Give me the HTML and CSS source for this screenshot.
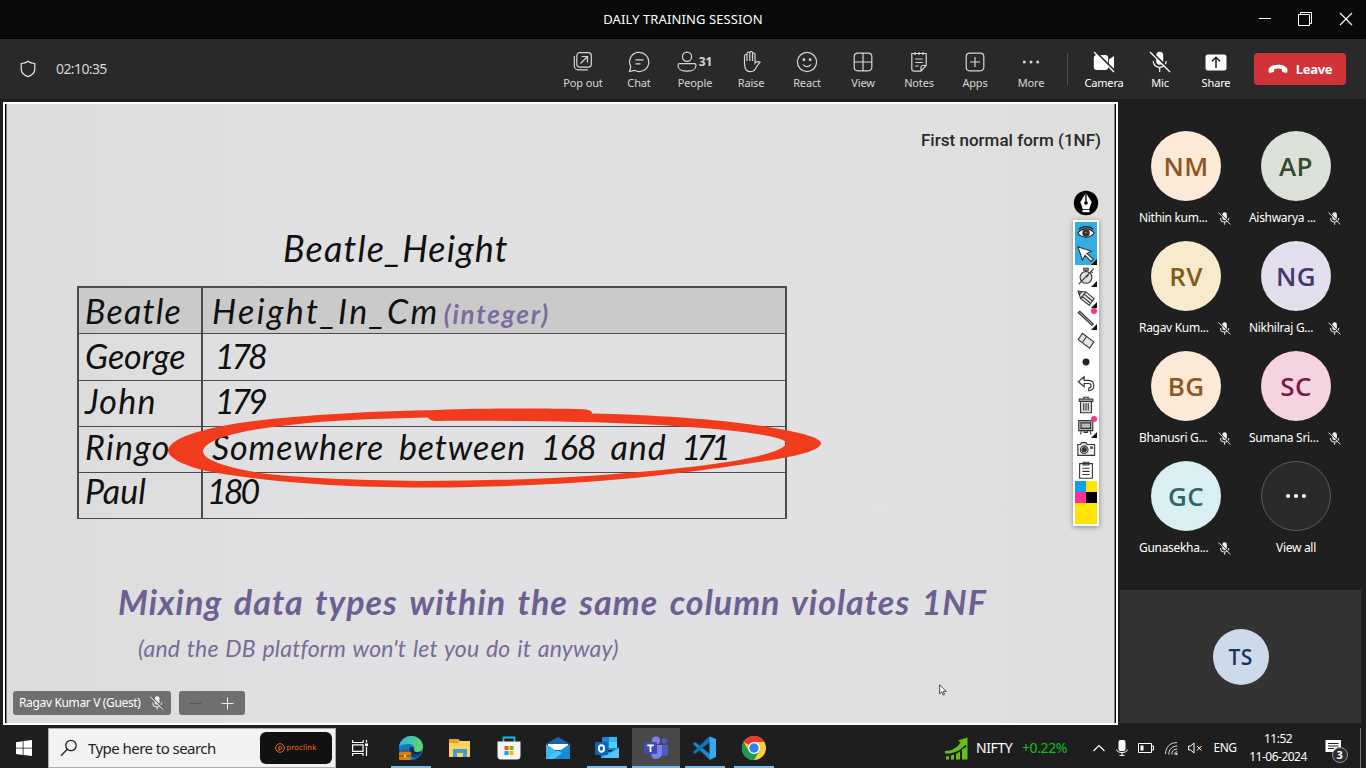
FILE: index.html
```html
<!DOCTYPE html>
<html lang="en">
<head>
<meta charset="utf-8">
<title>Daily training session</title>
<link rel="stylesheet" href="styles.css">
</head>
<body>
<svg class="defs" width="0" height="0">
  <symbol id="mic-off" viewBox="0 0 12 12"><rect x="4" y="0.300" width="4.200" height="7.200" rx="2.100" fill="#f2f2f2"/><path d="M2.300 5.500c0 5 7.600 5 7.600 0M6.100 9v2.700" fill="none" stroke="#d8d8d8" stroke-width="1"/><path d="M1.200.5l10.500 10.500" stroke="#333" stroke-width="1"/><path d="M.4.5l11 11" stroke="#ddd" stroke-width=".9"/></symbol>
</svg>
<header class="titlebar">
  <span class="titlebar-text">DAILY TRAINING SESSION</span>
  <div class="window-controls">
    <svg width="14" height="14" viewBox="0 0 14 14"><path d="M1 6.500h12" stroke="#fff"/></svg>
    <svg width="15" height="15" viewBox="0 0 15 15" fill="none" stroke="#fff"><path d="M.5 2.500h11v11H.5zM2.500 2.500v-2h11v11h-2"/></svg>
    <svg width="14" height="14" viewBox="0 0 14 14"><path d="M1 1l12 12M13 1L1 13" stroke="#fff" stroke-width="1.100"/></svg>
  </div>
</header>
<nav class="toolbar">
  <svg class="shield" width="16" height="18" viewBox="0 0 16 18" fill="none" stroke="#e8e8e8" stroke-width="1.200"><path d="M8 1.200C6 2.800 4 3.300 1.200 3.500v5.200c0 4 2.300 6.400 6.800 7.900 4.500-1.500 6.800-3.900 6.800-7.900V3.500C12 3.300 10 2.800 8 1.200z"/></svg>
  <span class="timer">02:10:35</span>
  <div class="tools">
    <div class="tool"><svg viewBox="0 0 22 22"><rect x="4.800" y="1.700" width="14.500" height="14.500" rx="3"/><path d="M2.300 5v10c0 2 1.700 3.800 3.800 3.800h9.700M8.500 12.500l6.500-6.500M9.500 5.500h6v6"/></svg><span>Pop out</span></div>
    <div class="tool"><svg viewBox="0 0 22 22"><path d="M1.500 20.500l1.300-4.900A9.600 9.600 0 1 1 6.500 19.300zM7.500 8.800h8M7.500 12.800h5"/></svg><span>Chat</span></div>
    <div class="tool"><div class="people"><svg viewBox="0 0 22 22"><circle cx="11" cy="5.700" r="4.600"/><path d="M3.500 12.700h15c1 0 1.500.7 1.500 1.700 0 3.600-3.800 5.800-9 5.800s-9-2.200-9-5.800c0-1 .5-1.700 1.500-1.700z"/></svg><b>31</b></div><span>People</span></div>
    <div class="tool"><svg viewBox="0 0 22 22"><path d="M4.500 12V5c0-2 2.500-2 2.500 0v5-7.500c0-2 2.800-2 2.800 0V10 2c0-2 2.700-2 2.700 0v8-6.500c0-2 2.500-2 2.500 0V12c1.200-1.800 2.500-2 5-.8-2 1.500-3.300 4.500-4.500 6.500-1.200 2-3 3-5.500 3-3.800 0-5.500-3-5.500-8.700z"/></svg><span>Raise</span></div>
    <div class="tool"><svg viewBox="0 0 22 22"><circle cx="11" cy="11" r="9.600"/><path d="M7 13.500c1.800 2.800 6.200 2.800 8 0"/><circle cx="7.900" cy="8.700" r=".8" fill="#d6d6d6"/><circle cx="14.100" cy="8.700" r=".8" fill="#d6d6d6"/></svg><span>React</span></div>
    <div class="tool"><svg viewBox="0 0 22 22"><rect x="2.200" y="2.200" width="17.600" height="17.600" rx="3.500"/><path d="M11 2v18M2 11h18"/></svg><span>View</span></div>
    <div class="tool"><svg viewBox="0 0 22 22"><path d="M3.800 2.500h14.400v12L13 20.200H5.800c-1.200 0-2-.8-2-2zM18 14.500h-3c-1.300 0-2 .7-2 2V20M7 1v3M11 1v3M15 1v3M7.200 8h7.600M7.200 11.500h7.600M7.200 15h3.500"/></svg><span>Notes</span></div>
    <div class="tool"><svg viewBox="0 0 22 22"><rect x="2.200" y="2.200" width="17.600" height="17.600" rx="3.500"/><path d="M11 6v10M6 11h10"/></svg><span>Apps</span></div>
    <div class="tool"><svg viewBox="0 0 22 22" class="dots"><circle cx="4.300" cy="11" r="1.500"/><circle cx="11" cy="11" r="1.500"/><circle cx="17.700" cy="11" r="1.500"/></svg><span>More</span></div>
  </div>
  <i class="divider"></i>
  <div class="tools devices">
    <div class="tool"><svg viewBox="0 0 22 22"><rect x=".8" y="4" width="14.400" height="15" rx="3" fill="#fff" stroke="none"/><path d="M16 8.500l5-3.500v13l-5-3.500z" fill="#fff" stroke="none"/><path d="M2.500 1l19 19" stroke="#292929" stroke-width="2.400"/><path d="M1 1l20 20" stroke="#fff"/></svg><span>Camera</span></div>
    <div class="tool"><svg viewBox="0 0 22 22"><rect x="7.200" y=".7" width="7" height="13" rx="3.500" fill="#fff" stroke="none"/><path d="M4.200 10c0 8.500 13 8.500 13 0M10.700 16.500V21" stroke="#fff"/><path d="M2.500 1l19 19" stroke="#292929" stroke-width="2.400"/><path d="M1 1l20 20" stroke="#fff"/></svg><span>Mic</span></div>
    <div class="tool"><svg viewBox="0 0 22 22"><rect x=".5" y="3.500" width="21" height="16" rx="2.500" fill="#fff" stroke="none"/><path d="M11 17V6.500M7 10.300l4-4 4 4" stroke="#222" stroke-width="1.500"/></svg><span>Share</span></div>
  </div>
  <button class="leave"><svg width="20" height="10" viewBox="0 0 20 10"><path d="M10 .8C5 .8.7 2.800.5 6c-.1 2.200.6 3 1.800 2.800l2.600-.6c.8-.2 1.200-.8 1.200-1.500V5.200c2-1 5.800-1 7.800 0v1.500c0 .7.400 1.300 1.200 1.500l2.600.6c1.200.2 1.900-.6 1.800-2.800C19.300 2.800 15 .8 10 .8z" fill="#fff"/></svg>Leave</button>
</nav>
<main class="meeting">
  <section class="stage">
    <div class="slide">
      <p class="slide-topic">First normal form (1NF)</p>
      <h1 class="hand table-name">Beatle_Height</h1>
      <div class="hand table">
        <div class="cell head beatle">Beatle</div><div class="cell head"><span class="col-name">Height_In_Cm</span><em>(integer)</em></div>
        <div class="cell george">George</div><div class="cell number">178</div>
        <div class="cell john">John</div><div class="cell number third">179</div>
        <div class="cell ringo">Ringo</div><div class="cell somewhere">Somewhere between <span class="low">168</span> and <span class="high">171</span></div>
        <div class="cell paul">Paul</div><div class="cell paul n180">180</div>
      </div>
      <p class="hand lesson">Mixing data types within the same column violates 1NF</p>
      <p class="hand aside">(and the DB platform won't let you do it anyway)</p>
      <svg class="marker" width="660" height="86" viewBox="165 405 660 86"><path fill="#f03c1c" fill-rule="evenodd" d="M168 450C172 434 225 422 300 416.500C350 412.500 390 411 429 410.300C470 408.200 540 408 580 409C590 409.500 592 411 592 413.500C660 415 735 420 785 430C805 434 821 438 821 443.500C819 452 790 458 735 465.500C660 477 560 487 430 487.500C330 488 250 480 202 470C180 464 168 457 168 450ZM203 451C205 439 240 430 290 425C330 420 380 418.500 428 417.500C429 420 433 421.500 438 421C500 420.500 580 421 640 424C720 428 785 435 786 443C786 452 740 462 680 468C600 477 510 481 420 481C350 480 300 478 260 473C225 467 203 460 203 451Z"/></svg>
      <div class="annotator">
        <svg width="26" height="26" viewBox="0 0 26 26"><circle cx="13" cy="13" r="12.200" fill="#000"/><path d="M13 3L7.300 12l2.500 7h6.400l2.500-7z" fill="#fff"/><path d="M13 3v9" stroke="#000" stroke-width="1.300"/><path d="M9.500 19.800h7v2.400h-7z" fill="#fff"/><circle cx="13" cy="13" r="1.800"/></svg>
        <div class="palette">
          <div class="pick"><svg viewBox="0 0 22 22"><path d="M2 11c4.500-6 13.500-6 18 0-4.500 6-13.500 6-18 0z" fill="#fff" stroke="#222"/><circle cx="11" cy="11" r="3.500" fill="#333"/><circle cx="11" cy="10.500" r="1.200" fill="#fff"/><path d="M3 7c4-4 12-4 16 0" fill="none" stroke="#222"/></svg></div>
          <div class="pick more"><svg viewBox="0 0 22 22"><path d="M2 3l15 5-5 2.500 7 6-2.500 2.500-6.500-6.500-3 5z" fill="#fff" stroke="#333"/></svg></div>
          <div class="more"><svg viewBox="0 0 22 22"><circle cx="11" cy="12.500" r="6.500" fill="#ddd"/><path d="M8.500 2.500h5v2h-5zM11 4v2M11 12.500l3-3M3 20L19.500 3M16.500 5.500l2 2"/></svg></div>
          <div class="more"><svg viewBox="0 0 22 22"><path d="M2.500 3.500l8.500.8 9 7.500-5.500 7.200-9.500-7.500z" fill="#eee"/><path d="M11 4.300L5 11.500M2.500 3.500l4 .5-2.500 3zM9 6.800l9 7.500M7 9.300l9 7.500"/></svg></div>
          <div class="more dot"><svg viewBox="0 0 22 22"><path d="M2.500 4l1.700-1.500L19 16.500 17.500 18z" fill="#bbb"/></svg></div>
          <div><svg viewBox="0 0 22 22"><path d="M7 2.500l12.500 9.500-4.500 7L2.500 9.500zM11.500 6l-4.500 7" fill="#e4e4e4"/></svg></div>
          <div><svg viewBox="0 0 22 22"><circle cx="11" cy="11" r="3.800" fill="#222" stroke="none"/></svg></div>
          <div><svg viewBox="0 0 22 22"><path d="M9 3L2.500 8.500 9 14v-3.500h5c3.500 0 3.500 5 0 5v3c7.500-.5 7.500-11 0-11.500H9z"/></svg></div>
          <div><svg viewBox="0 0 22 22"><path d="M5 7h12v12.500H5z" fill="#ddd"/><path d="M3.500 4.500h15V7h-15zM8.500 4V2.500h5V4M8.500 9v8M11 9v8M13.500 9v8"/></svg></div>
          <div class="more dot"><svg viewBox="0 0 22 22"><path d="M3 4h15.500v11H3zM5.500 6.500h10.500v6H5.500zM6 15l-1 4M15.500 15l1 4M9 15v2h3.500v-2" fill="#bbb"/></svg></div>
          <div><svg viewBox="0 0 22 22"><path d="M2 6h3l1-2h5l1 2h8.500v12H2z" fill="#eee"/><circle cx="9" cy="11.800" r="4.200"/><circle cx="9" cy="11.800" r="2.300" fill="#333"/><circle cx="17" cy="9.500" r="1"/></svg></div>
          <div><svg viewBox="0 0 22 22"><path d="M4 4h14v16H4zM8 2.500h6V5.500H8zM7 9h8M7 12.500h8M7 16h8"/></svg></div>
          <div class="swatches"><i></i><i></i><i></i><i></i></div>
        </div>
      </div>
      <svg class="pointer" width="8" height="12" viewBox="0 0 8 12"><path d="M.6.8v9l2.200-2 1.400 3.200 1.300-.6-1.300-3h3z" fill="#fff" stroke="#222" stroke-width=".8"/></svg>
      <div class="stage-chips">
        <div class="chip presenter">Ragav Kumar V (Guest)<svg width="14" height="14"><use href="#mic-off"/></svg></div>
        <div class="chip zoomer"><svg width="13" height="13"><path d="M.5 6.500h12" stroke="#555"/></svg><svg width="13" height="13"><path d="M.5 6.500h12M6.500.5v12" stroke="#eee"/></svg></div>
      </div>
    </div>
  </section>
  <aside class="roster">
    <div class="people-grid">
      <div class="person nm"><div class="avatar">NM</div><div class="label">Nithin kum...<svg width="13" height="13"><use href="#mic-off"/></svg></div></div>
      <div class="person ap"><div class="avatar">AP</div><div class="label">Aishwarya ...<svg width="13" height="13"><use href="#mic-off"/></svg></div></div>
      <div class="person rv"><div class="avatar">RV</div><div class="label">Ragav Kum...<svg width="13" height="13"><use href="#mic-off"/></svg></div></div>
      <div class="person ng"><div class="avatar">NG</div><div class="label">Nikhilraj G...<svg width="13" height="13"><use href="#mic-off"/></svg></div></div>
      <div class="person bg"><div class="avatar">BG</div><div class="label">Bhanusri G...<svg width="13" height="13"><use href="#mic-off"/></svg></div></div>
      <div class="person sc"><div class="avatar">SC</div><div class="label">Sumana Sri...<svg width="13" height="13"><use href="#mic-off"/></svg></div></div>
      <div class="person gc"><div class="avatar">GC</div><div class="label">Gunasekha...<svg width="13" height="13"><use href="#mic-off"/></svg></div></div>
      <div class="person all"><div class="avatar"><svg width="22" height="6" fill="#fff"><circle cx="3" cy="3" r="2.100"/><circle cx="11" cy="3" r="2.100"/><circle cx="19" cy="3" r="2.100"/></svg></div><div class="label">View all</div></div>
    </div>
    <div class="self"><div class="avatar small">TS</div></div>
  </aside>
</main>
<footer class="taskbar">
  <div class="start"><svg width="16" height="16" fill="#fff"><path d="M0 2.300l6.700-1v6.400H0zM7.500 1.100L16 0v7.700H7.500zM0 8.500h6.700v6.400l-6.700-1zM7.500 8.500H16V16l-8.500-1.100z"/></svg></div>
  <div class="search"><svg width="18" height="18" viewBox="0 0 18 18" fill="none" stroke="#222" stroke-width="1.300"><circle cx="11" cy="6.500" r="5.200"/><path d="M7.300 10.200L1 16.700"/></svg><span>Type here to search</span>
    <div class="proclink"><svg width="10" height="10" viewBox="0 0 10 10" fill="none" stroke="#f26b21"><circle cx="5" cy="5" r="4.300"/><path d="M4 8V3.500h1.500a1.300 1.300 0 0 1 0 2.600H4"/></svg>proclink</div></div>
  <div class="taskview"><svg width="17" height="16" viewBox="0 0 17 16" fill="none" stroke="#fff" stroke-width="1.200"><path d="M.6 0v2.500h10.500V0M.6 4.800h10.500v6.500H.6zM.6 16v-2.500h10.500V16M14.500 0v2.500M14.500 7v9"/><path d="M13 4.800h3" stroke-width="2.600"/></svg></div>
  <div class="apps">
    <div class="app open"><svg viewBox="0 0 24 24"><defs><linearGradient id="eg" x1="0" x2="1" y1=".3" y2=".6"><stop stop-color="#2bb5e8"/><stop offset="1" stop-color="#63d957"/></linearGradient></defs><circle cx="12" cy="12" r="12" fill="#1479cc"/><path d="M0 11C2-3 22-4 24 10c0 6-7 7-9 5 1-3 0-7-5-7C5 8 1 9 0 11z" fill="url(#eg)"/><path d="M10 13c0-3 4-3 5-1-1 4 3 6 8 4-1 3-4 5-7 6-4-1-6-5-6-9z" fill="#123f78"/><path d="M12 12c2 0 2 3 4 4 3 1 5 0 7-1l-2 2c-4 2-9 0-9-5z" fill="#1e1e1e"/><rect y="16" width="12" height="8" rx="1" fill="#d38013"/><path d="M0 20h12M4 16v-2h4v2" fill="none" stroke="#7b410b"/><rect x="5" y="18.500" width="2.200" height="3" fill="#ffc83a"/></svg></div>
    <div class="app"><svg viewBox="0 0 24 24"><path d="M1 3h9l2 2h10v16H1z" fill="#ffd35b"/><path d="M1 3h9l1 2-1 2H1z" fill="#e6a21e"/><path d="M5 13h14v8h-4v-4H9v4H5z" fill="#3d9de0"/></svg></div>
    <div class="app"><svg viewBox="0 0 24 24"><path d="M6.500 7V1.500h11V7" fill="none" stroke="#21b7e8" stroke-width="1.800"/><path d="M.5 5.500h23V20q0 3.500-3.500 3.500H4Q.5 23.500.5 20z" fill="#f4f4f4"/><path d="M7.500 10h4v4h-4z" fill="#f25022"/><path d="M12.500 10h4v4h-4z" fill="#7fba00"/><path d="M7.500 15h4v4h-4z" fill="#00a4ef"/><path d="M12.500 15h4v4h-4z" fill="#ffb900"/></svg></div>
    <div class="app"><svg viewBox="0 0 24 24"><path d="M0 8l12-7 12 7z" fill="#1664ad"/><path d="M2 8h20v6H2z" fill="#fff"/><path d="M0 8l12 8L24 8v15H0z" fill="#38b7f1"/><path d="M12 16l12-8v15H0z" fill="#168cd8"/><path d="M0 23l12-9 4 3-8 6z" fill="#48c5f6"/></svg></div>
    <div class="app open"><svg viewBox="0 0 24 24"><path d="M7 1h15v13H7z" fill="#1784d8"/><path d="M14 1h8v5h-8z" fill="#35b8f1"/><path d="M14 6h8v6h-8z" fill="#4fd0ff"/><path d="M6 13l9 3 9-5v11H6z" fill="#1b91dd"/><path d="M6 22l18-10v10z" fill="#56c4f4"/><rect y="6" width="13" height="13" rx="1" fill="#0b65b7"/><ellipse cx="6.500" cy="12.500" rx="2.600" ry="3.200" fill="none" stroke="#fff" stroke-width="1.900"/></svg></div>
    <div class="app active"><svg viewBox="0 0 24 24"><circle cx="12" cy="4.500" r="4" fill="#7b83eb"/><circle cx="20.500" cy="5" r="2.800" fill="#5059c9"/><path d="M16 9h8v7q0 4-4 4h-4z" fill="#5059c9"/><path d="M7 9h11v7q0 7-6 7-5 0-5-6z" fill="#7b83eb"/><rect y="6" width="13" height="12" rx="1" fill="#4249b5"/><path d="M3.200 9.300h6.600M6.500 9.300V16" stroke="#fff" stroke-width="1.800"/></svg></div>
    <div class="app open"><svg viewBox="0 0 24 24"><path d="M0 8l2-2 15 12v5.500L16 23z" fill="#1684cf"/><path d="M0 16l2 2L17 6V1l-2 .5z" fill="#0b73ba"/><path d="M16.500.2L23 3v18l-6.500 3z" fill="#35aaf1"/></svg></div>
    <div class="app open"><svg viewBox="0 0 24 24"><circle cx="12" cy="12" r="12" fill="#ffcd40"/><path d="M12 12L1.600 6A12 12 0 0 1 22.400 6H12z" fill="#e33b2e"/><path d="M1.600 6A12 12 0 0 0 12 24l5.200-9L12 12l-5.200 3z" fill="#169c50"/><circle cx="12" cy="12" r="5.900" fill="#fff"/><circle cx="12" cy="12" r="4.700" fill="#3b7ded"/></svg></div>
  </div>
  <div class="stock"><svg width="23" height="23" viewBox="0 0 23 23" fill="#67bf17"><path d="M0 14c7 0 12-3 15.500-8.500L13 3.500 22.500.5v9L20 8C15 14 8 17 0 16.500z"/><path d="M1 19.500l3-.5v3.500H1zM6 18.500l3-1v5H6zM11 17l4-2.500v8h-4zM17 12.500l5.500-3.500v13.500H17z"/></svg><span class="nifty">NIFTY</span><span class="gain">+0.22%</span></div>
  <div class="tray">
    <svg width="12" height="8" fill="none" stroke="#fff" stroke-width="1.200"><path d="M.5 7L6 1.500 11.500 7"/></svg>
    <svg width="12" height="16"><rect x="2.500" width="7" height="11" rx="2" fill="#fff"/><path d="M.6 9.500c0 4 10.800 4 10.800 0M6 12.500V15M3.500 15.400h5" fill="none" stroke="#fff"/></svg>
    <svg width="16" height="10"><path d="M.5.500h13v9H.5zM14 3h1.500v4H14" fill="none" stroke="#fff"/><path d="M2.500 2.500h3v5h-3z" fill="#fff"/></svg>
    <svg width="13" height="13" fill="none" stroke="#ddd"><path d="M.6 12C.6 5 5 .6 12 .6M3.800 12.500c0-5 3.400-8.500 8.500-8.500M6.800 12.500c0-3.500 2-5.500 5.500-5.500M9.600 12.500c0-2 1-2.800 2.600-2.800"/><circle cx="11.500" cy="12" r=".8" fill="#fff"/></svg>
    <svg width="15" height="12" fill="none" stroke="#fff"><path d="M.6 4h2L6 1v10L2.600 8h-2zM9 4l4.500 4.500M13.500 4L9 8.500"/></svg>
    <span class="lang">ENG</span>
    <div class="clock"><span>11:52</span><span>11-06-2024</span></div>
    <div class="notice"><svg width="17" height="16"><path d="M.5 0H16v12h-3l-3 3v-3H.5z" fill="#fff"/><path d="M3 3.500h10.500M3 6h10.500M3 8.500h6" stroke="#222"/></svg><b>3</b></div>
  </div>
</footer>
</body>
</html>
```
FILE: styles.css
```css
* { box-sizing: border-box; }
body { margin: 0; width: 1366px; height: 768px; overflow: hidden; display: flex; flex-direction: column; background: #1f1f1f; color: #fff; font: 12px/16px "Noto Sans", "Open Sans", sans-serif; letter-spacing: -0.3px; }
h1, p { margin: 0; }
svg { flex: none; display: block; }
.defs { position: absolute; }

.titlebar { flex: none; height: 39px; background: #0a0a0a; border-bottom: 1px solid #000; display: grid; grid-template-columns: 1fr auto 1fr; align-items: center; }
.titlebar-text { grid-column: 2; font-size: 13px; letter-spacing: 0.1px; }
.window-controls { display: flex; justify-content: flex-end; gap: 26px; padding-right: 13px; align-items: center; }

.toolbar { flex: none; height: 60px; background: #292929; display: flex; align-items: center; padding: 0 20px; color: #d6d6d6; }
.shield { width: 16px; }
.timer { margin-left: 20px; font-size: 14px; letter-spacing: -0.6px; flex: 1; }
.tools { display: flex; }
.tool { width: 56px; display: flex; flex-direction: column; align-items: center; gap: 1px; font-size: 11px; letter-spacing: -0.15px; white-space: nowrap; padding-top: 3px; }
.tool svg { width: 22px; height: 22px; fill: none; stroke: #d6d6d6; stroke-width: 1.2; }
.tool svg.dots { fill: #d6d6d6; stroke: none; }
.tool span { line-height: 17px; }
.people { display: flex; align-items: center; gap: 1px; height: 22px; margin-left: -2px; }
.people b { font-size: 12px; line-height: 16px; }
.divider { width: 1px; height: 32px; background: #525252; margin: 0 8px; }
.devices { color: #fff; }
.leave { width: 92px; height: 32px; margin-left: 10px; border: 0; border-radius: 4px; background: #d13438; color: #fff; font: 700 13px/18px "Noto Sans", sans-serif; letter-spacing: -0.3px; display: flex; align-items: center; justify-content: center; gap: 8px; padding: 0; }

.meeting { flex: none; height: 629px; display: flex; padding: 3px 0 3px 3px; }
.stage { width: 1115px; height: 623px; border: 2px solid #fff; background: #000; padding: 0 1px; }
.slide { position: relative; height: 619px; border-left: 1px solid #777; border-right: 1px solid #888; background: linear-gradient(90deg, #dcdcdc, #e0dfe1 25%, #e1e0e2 80%, #dededd); color: #111; }
.slide-topic { padding: 27px 13px 0 0; text-align: right; font: 500 17px/18px Roboto, sans-serif; letter-spacing: 0.020px; color: #292929; }
.hand { font-family: Lato, sans-serif; font-style: italic; font-weight: 400; white-space: nowrap; }
.table-name { margin: 75px 0 0 276px; font-size: 36px; line-height: 48px; letter-spacing: 1.15px; }
.table { margin: 14px 0 0 70px; width: 710px; height: 233px; display: grid; grid-template-columns: 124px 1fr; grid-template-rows: repeat(5, 46.300px); border: solid #4c4c4c; border-width: 2px 0 0 2px; font-size: 34px; line-height: 38px; letter-spacing: 0; }
.cell { border-right: 2px solid #4c4c4c; border-bottom: 1.500px solid #4c4c4c; padding: 0 0 0 6px; height: 46.300px; }
.cell:nth-child(even) { padding-left: 9px; }
.cell.head { background: #cacaca; padding-top: 4px; }
.head em { font-size: 26px; font-weight: 700; color: #7c6c9f; margin-left: 4px; letter-spacing: 1.800px; }
.beatle { letter-spacing: 1.200px; }
.col-name { letter-spacing: 2.400px; }
.cell.george, .george + .cell { padding-top: 3px; }
.john, .ringo { letter-spacing: 1.300px; }
.john, .john + .cell { padding-top: 1px; }
.cell.number { padding-left: 12px; letter-spacing: -3.200px; }
.somewhere { letter-spacing: 0.900px; word-spacing: 6px; }
.low { letter-spacing: -1px; }
.high { letter-spacing: -5px; }
.cell.ringo, .cell.somewhere { line-height: 37px; padding-top: 1px; }
.paul { line-height: 35px; }
.cell.n180 { padding-left: 4px; letter-spacing: -3px; }
.lesson { margin: 60px 0 0 111px; font-size: 34px; line-height: 45px; font-weight: 700; color: #6d5f92; letter-spacing: 1px; word-spacing: 3px; }
.aside { margin: 9px 0 0 131px; font-size: 23px; line-height: 30px; color: #776c99; letter-spacing: 0.170px; word-spacing: 1.200px; }
.marker { position: absolute; left: 158px; top: 301px; }
.annotator { position: absolute; left: 1066px; top: 86px; display: flex; flex-direction: column; gap: 4px; align-items: center; }
.palette { width: 26px; height: 306px; padding: 2px; background: #fff; box-shadow: 0 1px 5px #888; display: flex; flex-direction: column; }
.palette > div { position: relative; height: 21.600px; width: 22px; display: flex; align-items: center; justify-content: center; }
.palette > div > svg { width: 20px; height: 20px; fill: none; stroke: #333; stroke-width: 1.200; }
.palette .pick { background: #35ade3; }
.palette .more::after { content: ""; position: absolute; right: 0; bottom: 0; border: 3px solid; border-color: transparent #111 #111 transparent; }
.palette .dot::before { content: ""; position: absolute; right: 0; top: 0; width: 6px; height: 6px; border-radius: 50%; background: #ff3093; z-index: 1; }
.palette > .swatches { height: 43px; display: grid; grid-template-columns: 11px 11px; grid-template-rows: 11px 11px; align-content: start; background: #ffe500; }
.swatches i:nth-child(1) { background: #159fe8; }
.swatches i:nth-child(3) { background: #ff3093; }
.swatches i:nth-child(4) { background: #000; }
.swatches i { width: 11px; height: 11px; }
.pointer { position: absolute; left: 932px; top: 580px; }
.stage-chips { position: absolute; left: 6px; top: 587px; display: flex; gap: 8px; }
.chip { height: 24px; border-radius: 3px; background: #706f70; color: #fff; display: flex; align-items: center; font-size: 12px; letter-spacing: -0.35px; }
.presenter { width: 158px; padding: 0 7px 0 6px; justify-content: space-between; white-space: nowrap; }
.zoomer { width: 66px; padding: 0 11px 0 10px; justify-content: space-between; }

.roster { width: 243px; margin-left: 2px; display: flex; flex-direction: column; }
.people-grid { height: 488px; padding: 29px 0 0 11px; display: grid; grid-template-columns: 110px 110px; grid-auto-rows: 110px; }
.person { display: flex; flex-direction: column; align-items: center; }
.avatar { width: 70px; height: 70px; border-radius: 50%; display: flex; align-items: center; justify-content: center; font: 600 26px/36px "Open Sans", "Noto Sans", sans-serif; letter-spacing: 0.300px; padding-bottom: 1px; }
.label { width: 92px; margin: 9px 0 0 -2px; display: flex; justify-content: space-between; align-items: center; font-size: 12px; white-space: nowrap; }
.nm .avatar { background: #fde9d7; color: #8e5722; }
.ap .avatar { background: #dbe1d9; color: #354a29; }
.rv .avatar { background: #f7eacd; color: #815b14; }
.ng .avatar { background: #e3dfee; color: #443a66; }
.bg .avatar { background: #fde9d7; color: #8e5722; }
.sc .avatar { background: #f5d4e1; color: #7a1b46; }
.gc .avatar { background: #daeff1; color: #2e6568; }
.all .avatar { background: #292929; border: 1px solid #5c5c5c; padding: 0; }
.all .label { justify-content: center; margin-left: 0; }
.self { width: 241px; height: 133px; background: #333; display: flex; align-items: center; justify-content: center; }
.avatar.small { width: 56px; height: 56px; font-size: 21px; background: #cddaea; color: #153760; padding: 0; }

.taskbar { flex: none; height: 40px; display: flex; align-items: center; background: #1e1e1e; }
.start { width: 48px; display: flex; justify-content: center; }
.search { width: 288px; height: 40px; border: 1px solid #aaa; background: #f2f2f2; color: #222; display: flex; align-items: center; padding: 0 3px 0 11px; font-size: 15px; letter-spacing: -0.550px; }
.search span { flex: 1; margin-left: 10px; }
.proclink { width: 72px; height: 32px; border-radius: 6px; background: #111; color: #f26b21; display: flex; align-items: center; justify-content: center; gap: 1px; font: 7.500px/10px "DejaVu Sans", sans-serif; letter-spacing: 0.050px; }
.taskview { width: 48px; display: flex; justify-content: center; }
.apps { display: flex; gap: 1px; margin-left: 3px; height: 40px; }
.app { width: 48px; height: 40px; display: flex; align-items: center; justify-content: center; }
.app svg { width: 24px; height: 24px; }
.open { background: linear-gradient(#76b9ed, #76b9ed) 50% 100% / 40px 2px no-repeat; }
.active { background: linear-gradient(#76b9ed, #76b9ed) 50% 100% / 48px 2px no-repeat #494949; }
.stock { margin-left: 167px; width: 145px; display: flex; align-items: center; font-size: 14px; letter-spacing: -0.4px; }
.nifty { margin-left: 8px; width: 46px; }
.gain { color: #13bd20; }
.tray { display: flex; align-items: center; height: 40px; width: 271px; padding-left: 3px; gap: 10.500px; border-right: 1px solid #777; margin-right: 4px; }
.lang { letter-spacing: -0.5px; }
.clock { display: flex; flex-direction: column; align-items: center; width: 60px; line-height: 18px; letter-spacing: -0.5px; margin-left: 1px; }
.notice { display: flex; margin-left: 6px; position: relative; }
.notice b { position: absolute; left: 7px; top: 7px; width: 16px; height: 16px; border-radius: 50%; border: 1px solid #999; background: #2c2c2c; font-size: 11px; line-height: 14px; text-align: center; }
```
